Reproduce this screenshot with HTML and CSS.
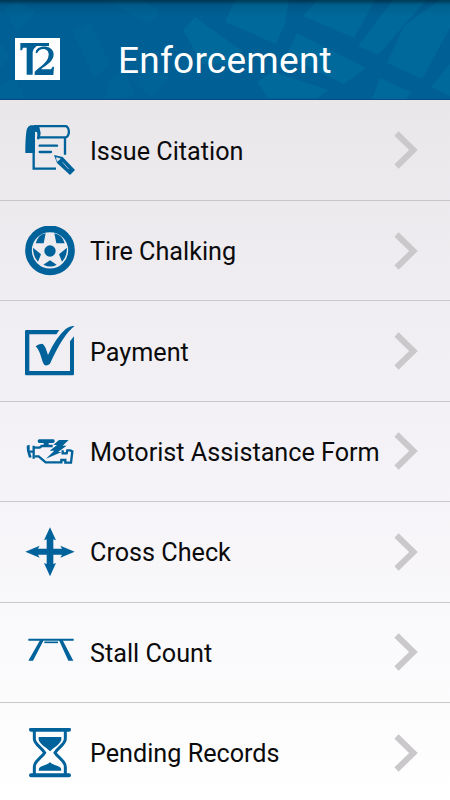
FILE: index.html
```html
<!DOCTYPE html>
<html lang="en">
<head>
<meta charset="utf-8">
<title>Enforcement</title>
<link rel="stylesheet" href="styles.css">
</head>
<body>
<div class="app">
  <header class="header">
    <svg class="header-map" viewBox="0 0 450 100" aria-hidden="true">
      <path class="faint" d="M105 0h37l18 11-10 13zM72 31l18-9 20 42-15 14zM17 0l18 12-18 21L4 8zM0 42l10 15-10 12zM0 86l15-8 10 20H0zM110 78l15-8 10 26-30 3zM150 64l18 14-16 20-19-16z"/>
      <path d="M183 30l12-13 47 34-8 12-32 1zM235 0h54l-4 24-9 20-51-22zM317 0h58l-21 38-51-22zM393 0h33l-48 55-20-9zM439 0h11v28l-28 51-35-16 17-37zM297 33l69 35-22 16-58-28zM257 82l16-10 56 18-12 8h-49zM380 78l31 14-5 7h-34zM450 64v32l-19-9z"/>
    </svg>
    <svg class="logo" viewBox="45 114 135 126" role="img" aria-label="T2">
      <path fill="#fff" d="M45 114h135v126H45z"/>
      <path fill="#005f95" d="M61 129h86v9h-37q-9 6-12 18v68H80v-81H69l-3 8h-5z"/>
      <path fill="#005f95" d="M107 158c1-26 54-25 54 5 0 23-26 34-38 45h30l5-8h4l-2 25h-56v-10c17-16 41-28 42-50 1-22-27-24-35-5z"/>
    </svg>
    <h1 class="title">Enforcement</h1>
  </header>
  <main class="menu">
    <div class="row">
      <svg class="icon" viewBox="45 45 150 150" aria-hidden="true">
        <path class="fill" d="M62 46h26v42h-6V72q0-9-7-6v63H46c0-26 1-61 5-73q3-8 11-10z"/>
        <path class="line" d="M72 48h93c15 0 16 34 0 34H87M80 49c10 8 11 27 3 37M71 84v92h67M165 83v51" stroke-width="7"/>
        <path class="line" d="M89 107h52M89 126h34" stroke-width="7" stroke-linecap="round"/>
        <path class="fill" d="M132 135l26 6 37 39-15 15-39-36z"/>
        <path d="M139 143l12 3-9 8zM158 157l18 20" fill="#eceaed" stroke="#eceaed" stroke-width="2"/>
      </svg>
      <span class="label">Issue Citation</span>
      <svg class="chevron" viewBox="0 0 24 38" aria-hidden="true"><path d="M2.5 2.5 19.5 19 2.5 35.5"/></svg>
    </div>
    <div class="row">
      <svg class="icon" viewBox="45 48 150 150" aria-hidden="true">
        <circle class="line" cx="120" cy="121" r="64.5" stroke-width="20"/>
        <path class="fill" d="M89 78q7-6 18-8l-6 30H77q3-13 12-22zM133 70q12 3 19 9 9 8 12 21h-25zM69 113l24 20-9 22q-15-14-15-42zM171 113l-24 20 9 22q15-14 15-42zM120 151l20 13q-18 11-40 0z"/>
        <circle class="fill" cx="120" cy="123" r="17"/>
      </svg>
      <span class="label">Tire Chalking</span>
      <svg class="chevron" viewBox="0 0 24 38" aria-hidden="true"><path d="M2.5 2.5 19.5 19 2.5 35.5"/></svg>
    </div>
    <div class="row">
      <svg class="icon" viewBox="45 48 150 150" aria-hidden="true">
        <path class="fill" d="M49 60h99l-9 13H58v110h122V94l12-15v113q0 4-4 4H49q-4 0-4-4V64q0-4 4-4z"/>
        <path class="fill" d="M77 109q8-8 19-8 8 0 18 34 22-50 53-78 10-9 28-10-35 25-75 114-7 7-15 5-5-2-10-20-8-28-18-37z"/>
      </svg>
      <span class="label">Payment</span>
      <svg class="chevron" viewBox="0 0 24 38" aria-hidden="true"><path d="M2.5 2.5 19.5 19 2.5 35.5"/></svg>
    </div>
    <div class="row">
      <svg class="icon" viewBox="45 18 150 150" aria-hidden="true">
        <path class="fill" d="M83 63q0-5 5-5h42q4 0 4 5 0 6-5 6h-13v8h-15v-8H88q-5 0-5-6z"/>
        <path class="line" d="M57 95h15M71 77v39M72 83h17l6-5h33M75 109h11l21 18h47v-7h12v8h17l4-34-6-3h-9l-2 9h-12V91" stroke-width="7"/>
        <path class="fill" d="M50 77l9-3v19l6 19-8 1-6-20zM147 60h29l-18 17h12l-26 19h11l-47 20 25-24h-14l22-17h-11z"/>
      </svg>
      <span class="label">Motorist Assistance Form</span>
      <svg class="chevron" viewBox="0 0 24 38" aria-hidden="true"><path d="M2.5 2.5 19.5 19 2.5 35.5"/></svg>
    </div>
    <div class="row">
      <svg class="icon" viewBox="45 50 150 150" aria-hidden="true">
        <path class="fill" d="M120 51l18 39-8-3v28h26l-5-9 43 18-43 18 5-9h-26v28l8-3-18 40-18-40 8 3v-28H84l5 9-43-18 43-18-5 9h26V87l-8 3z"/>
      </svg>
      <span class="label">Cross Check</span>
      <svg class="chevron" viewBox="0 0 24 38" aria-hidden="true"><path d="M2.5 2.5 19.5 19 2.5 35.5"/></svg>
    </div>
    <div class="row">
      <svg class="icon" viewBox="45 21 150 150" aria-hidden="true">
        <path class="fill" d="M55 56h136v6H55zM90 61h11l-32 61H55zM147 61h11l32 61h-15z"/>
        <path class="line" d="M103 67h41" stroke-width="5"/>
      </svg>
      <span class="label">Stall Count</span>
      <svg class="chevron" viewBox="0 0 24 38" aria-hidden="true"><path d="M2.5 2.5 19.5 19 2.5 35.5"/></svg>
    </div>
    <div class="row">
      <svg class="icon" viewBox="45 39 150 150" aria-hidden="true">
        <path class="line" d="M63 44h114M63 181h114" stroke-width="12" stroke-linecap="round"/>
        <path class="line" d="M73 47v24c0 17 22 26 31 42-9 15-31 25-31 42v23M166 47v24c0 17-22 26-31 42 9 15 31 25 31 42v23" stroke-width="9"/>
        <path class="fill" d="M86 66h68v9q-5 13-22 23l-12 11-12-11q-17-10-22-23zM120 142q8 7 28 13 6 2 6 12H86q0-10 6-12 20-6 28-13z"/>
      </svg>
      <span class="label">Pending Records</span>
      <svg class="chevron" viewBox="0 0 24 38" aria-hidden="true"><path d="M2.5 2.5 19.5 19 2.5 35.5"/></svg>
    </div>
  </main>
</div>
</body>
</html>
```
FILE: styles.css
```css
* { box-sizing: border-box; }

body {
  margin: 0;
  font-family: Roboto, "Liberation Sans", sans-serif;
}

.app {
  width: 450px;
  height: 800px;
  overflow: hidden;
  background: linear-gradient(#e9e7ea 100px, #f5f3f7 480px, #fff 800px);
}

.header {
  position: relative;
  display: flex;
  align-items: center;
  height: 100px;
  padding: 18px 15px 0;
  background: #005f94;
  border-bottom: 1px solid #004a85;
}

.header-map {
  position: absolute;
  inset: 0;
  width: 450px;
  height: 100px;
  fill: #00699b;
}

.faint { opacity: 0.45; }

.header::after {
  content: "";
  position: absolute;
  inset: 0 0 auto;
  height: 16px;
  background: linear-gradient(rgba(0, 25, 40, 0.6), rgba(0, 40, 60, 0.15) 5px, transparent);
}

.logo {
  position: relative;
  width: 45px;
  height: 42px;
}

.title {
  position: relative;
  margin: 5px 0 0 58px;
  color: #fff;
  font-size: 37px;
  font-weight: 400;
  line-height: 44px;
  letter-spacing: 0.25px;
}

.menu { padding-top: 0.6px; }

.row {
  display: flex;
  align-items: center;
  height: 100.4px;
  padding: 0 32px 0 25px;
  border-bottom: 1px solid #c9c7ca;
}

.row:last-child { border-bottom-color: transparent; }

.icon {
  flex: none;
  width: 50px;
  height: 50px;
  margin-right: 15px;
}

.fill { fill: #00629b; }

.line {
  fill: none;
  stroke: #00629b;
}

.label {
  flex: 1;
  padding-top: 3px;
  color: #0b0b0c;
  font-size: 25.2px;
  line-height: 32px;
  white-space: nowrap;
}

.chevron {
  flex: none;
  width: 24px;
  height: 38px;
  fill: none;
  stroke: #cac8cb;
  stroke-width: 6;
}
```
